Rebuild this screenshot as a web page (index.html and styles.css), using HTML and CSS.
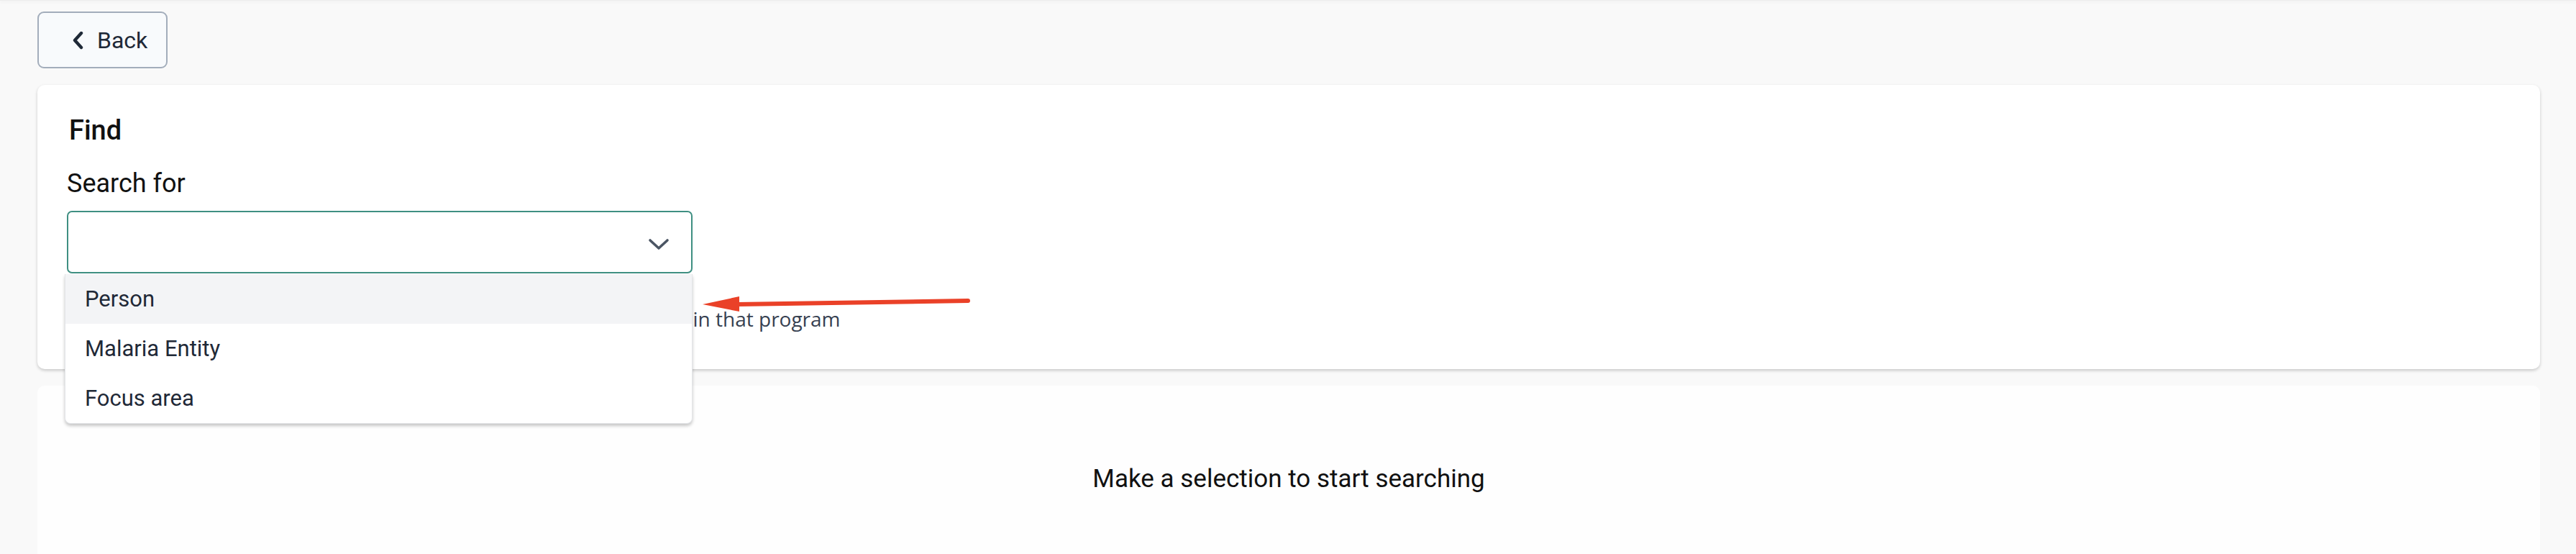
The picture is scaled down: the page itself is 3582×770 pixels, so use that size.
FILE: index.html
```html
<!DOCTYPE html>
<html lang="en">
<head>
<meta charset="utf-8">
<title>Find</title>
<link rel="stylesheet" href="styles.css">
</head>
<body>
<div class="topbar"></div>
<main class="page">
  <button class="back-btn" type="button">
    <svg class="back-icon" viewBox="0 0 18 26" width="18" height="26" aria-hidden="true">
      <path d="M14 3 L5 13 L14 23" fill="none" stroke="#1f2937" stroke-width="4.4" stroke-linecap="round" stroke-linejoin="round"/>
    </svg>
    <span>Back</span>
  </button>

  <section class="card find-card">
    <h2 class="card-title">Find</h2>
    <label class="field-label">Search for</label>
    <div class="select-wrap">
      <div class="select-box">
        <svg class="select-chevron" viewBox="0 0 30 17" width="30" height="17" aria-hidden="true">
          <path d="M3 3 L15 14 L27 3" fill="none" stroke="#4b5563" stroke-width="3.6" stroke-linecap="round" stroke-linejoin="round"/>
        </svg>
      </div>
      <ul class="menu">
        <li class="menu-item active">Person</li>
        <li class="menu-item">Malaria Entity</li>
        <li class="menu-item">Focus area</li>
      </ul>
    </div>
    <p class="helper">Select what you want to search for to get records that are enrolled in that program</p>
  </section>

  <section class="card results-card">
    <p class="empty">Make a selection to start searching</p>
  </section>

  <svg class="annotation" viewBox="0 0 390 36" width="390" height="36" aria-hidden="true">
    <path d="M55 17 L376 12" stroke="#ea4128" stroke-width="6" stroke-linecap="round" fill="none"/>
    <polygon points="7,17 58,6 58,27" fill="#ea4128"/>
  </svg>
</main>
</body>
</html>
```

FILE: styles.css
```css
* { box-sizing: border-box; }

html, body {
  margin: 0;
  padding: 0;
}

body {
  background: #f9f9f9;
  font-family: Roboto, "Noto Sans", "Liberation Sans", sans-serif;
  color: #111;
  height: 770px;
  overflow: hidden;
}

.topbar {
  height: 1px;
  background: #ececec;
  box-shadow: 0 1px 5px rgba(0, 0, 0, 0.12);
}

.page {
  position: relative;
  padding: 15px 50px 0 52px;
}

.back-btn {
  display: flex;
  align-items: center;
  gap: 18px;
  height: 79px;
  width: 181px;
  padding: 0 0 0 45px;
  background: #f8fafc;
  border: 2px solid #a3adbb;
  border-radius: 9px;
  font-family: inherit;
  font-size: 32px;
  color: #1f2937;
  cursor: pointer;
}

.back-icon { flex: none; }

.card {
  background: #fff;
  border-radius: 10px;
}

.find-card {
  margin-top: 23px;
  padding: 41px 41px 51px;
  box-shadow: 0 2px 4px rgba(0, 0, 0, 0.2);
  height: 395px;
}

.card-title {
  margin: 0;
  padding-left: 3px;
  font-size: 38px;
  line-height: 45px;
  font-weight: 500;
  color: #111;
}

.field-label {
  display: block;
  margin-top: 30px;
  font-size: 36px;
  line-height: 42px;
  color: #111;
}

.select-wrap {
  position: relative;
  width: 870px;
  margin-top: 17px;
}

.select-box {
  height: 87px;
  border: 2px solid #3f8f82;
  border-radius: 7px;
  background: #fff;
  display: flex;
  align-items: center;
  justify-content: flex-end;
  padding: 6px 30px 0 0;
}

.menu {
  position: absolute;
  top: 88px;
  left: -3px;
  right: 0;
  margin: 0;
  padding: 0;
  list-style: none;
  background: #fff;
  border: 1px solid #e3e5e8;
  border-top: none;
  border-radius: 0 0 8px 8px;
  box-shadow: 0 3px 4px rgba(0, 0, 0, 0.22);
  overflow: hidden;
  z-index: 2;
}

.menu-item {
  height: 69px;
  line-height: 69px;
  padding-left: 27px;
  font-size: 31px;
  color: #1f2937;
}

.menu-item.active { background: #f3f4f6; }

.helper {
  margin: 47px 0 0;
  font-family: "Open Sans", Roboto, sans-serif;
  font-size: 28px;
  line-height: 32px;
  color: #374151;
  white-space: nowrap;
}

.results-card {
  margin-top: 23px;
  height: 400px;
  padding-top: 109px;
  background: #fefefe;
}

.empty {
  margin: 0;
  text-align: center;
  font-size: 35px;
  line-height: 42px;
  color: #111;
}

.annotation {
  position: absolute;
  left: 970px;
  top: 405px;
  z-index: 3;
}
```
